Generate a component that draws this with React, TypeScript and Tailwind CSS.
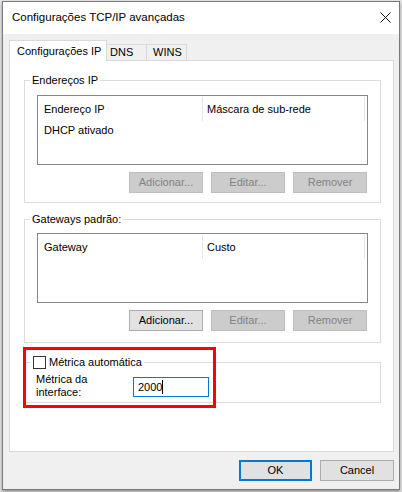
import React from 'react';

const font = { fontFamily: '"Liberation Sans", Arial, sans-serif' };

function WinButton({ label, disabled, primary }: { label: string; disabled?: boolean; primary?: boolean }) {
  return (
    <button
      className={
        'h-[21px] flex items-center justify-center text-[11px] leading-none ' +
        (disabled
          ? 'w-[74px] bg-[#cccccc] border border-[#bfbfbf] text-[#838383]'
          : primary
          ? 'w-[73px] bg-[#e1e1e1] border-2 border-[#0078d7] text-black'
          : 'w-[74px] bg-[#e1e1e1] border border-[#adadad] text-black')
      }
    >
      {label}
    </button>
  );
}

function ListBox({ col1, col2, rows }: { col1: string; col2: string; rows: string[] }) {
  return (
    <div className="w-[331px] h-[70px] border border-[#828790] bg-white">
      <div className="flex h-[25px] pt-px">
        <div className="w-[165px] pl-[6px] flex items-center border-r border-[#e5e5e5]">{col1}</div>
        <div className="w-[162px] pl-[4px] flex items-center border-r border-[#e5e5e5]">{col2}</div>
      </div>
      {rows.map(r => (
        <div key={r} className="h-[18px] pl-[6px] flex items-center">{r}</div>
      ))}
    </div>
  );
}

export default function App() {
  return (
    <div className="w-[402px] h-[492px] bg-[#e4e4e4] overflow-hidden text-[11px] text-black" style={font}>
      <div className="ml-[2px] mt-px w-[398px] h-[489px] border border-[#7a7a7a] bg-[#f0f0f0] flex flex-col shadow-[0_2px_3px_rgba(0,0,0,0.35)]">
        {/* title bar */}
        <div className="h-[32px] bg-white flex items-center justify-between pl-[9px] pr-[8px]">
          <span className="text-[11.5px]">Configurações TCP/IP avançadas</span>
          <svg width="11" height="11" viewBox="0 0 11 11" className="mt-[-1px]">
            <path d="M0.5 0.5 L10.5 10.5 M10.5 0.5 L0.5 10.5" stroke="#111" strokeWidth="1" />
          </svg>
        </div>

        <div className="flex-1 pt-[6px]">
          {/* tabs */}
          <div className="flex h-[20px] ml-[6px] items-start">
            <div className="relative z-10 h-[21px] w-[98px] pl-[7px] flex items-center bg-white border-x border-t border-[#d9d9d9]">
              Configurações IP
            </div>
            <div className="mt-[4px] h-[16px] w-[40px] pl-[3px] flex items-center border-t border-r border-[#d9d9d9]">DNS</div>
            <div className="mt-[4px] h-[16px] w-[40px] pl-[6px] flex items-center border-t border-r border-[#d9d9d9]">WINS</div>
          </div>

          {/* panel */}
          <div className="relative ml-[6px] w-[385px] h-[392px] border border-[#d9d9d9] bg-white pl-[14px] pt-[11px]">
            <fieldset className="w-[357px] border border-[#dcdcdc]">
              <legend className="ml-[5px] px-[2px] leading-[16px]">Endereços IP</legend>
              <div className="px-[12px] pt-[7px] pb-[9px]">
                <ListBox col1="Endereço IP" col2="Máscara de sub-rede" rows={['DHCP ativado']} />
                <div className="flex justify-end gap-[8px] mt-[7px] pr-px">
                  <WinButton label="Adicionar..." disabled />
                  <WinButton label="Editar..." disabled />
                  <WinButton label="Remover" disabled />
                </div>
              </div>
            </fieldset>

            <fieldset className="mt-[8px] w-[357px] border border-[#dcdcdc]">
              <legend className="ml-[5px] px-[2px] leading-[16px]">Gateways padrão:</legend>
              <div className="px-[12px] pt-[6px] pb-[11px]">
                <ListBox col1="Gateway" col2="Custo" rows={[]} />
                <div className="flex justify-end gap-[8px] mt-[7px] pr-px">
                  <WinButton label="Adicionar..." />
                  <WinButton label="Editar..." disabled />
                  <WinButton label="Remover" disabled />
                </div>
              </div>
            </fieldset>

            <fieldset className="mt-[11px] w-[357px] border border-[#dcdcdc]">
              <legend className="ml-[6px] px-[2px] leading-[16px] flex items-center gap-[3px]">
                <span className="w-[13px] h-[13px] border border-[#333333] bg-white" />
                <span>Métrica automática</span>
              </legend>
              <div className="flex items-start pl-[11px] pb-[3px]">
                <div className="w-[97px] pt-[3px] leading-[13px]">
                  Métrica da
                  <br />
                  interface:
                </div>
                <div className="mt-[7px] w-[76px] h-[20px] border border-[#0078d7] bg-white flex items-center pl-[4px]">
                  <span>2000</span>
                  <span className="w-px h-[14px] bg-black" />
                </div>
              </div>
            </fieldset>

            {/* annotation */}
            <div className="absolute left-[13px] top-[286px] w-[193px] h-[61px] border-[3px] border-[#ff0000]" />
          </div>

          {/* dialog buttons */}
          <div className="flex justify-end gap-[8px] mt-[8px] pr-[5px]">
            <WinButton label="OK" primary />
            <WinButton label="Cancel" />
          </div>
        </div>
      </div>
    </div>
  );
}
